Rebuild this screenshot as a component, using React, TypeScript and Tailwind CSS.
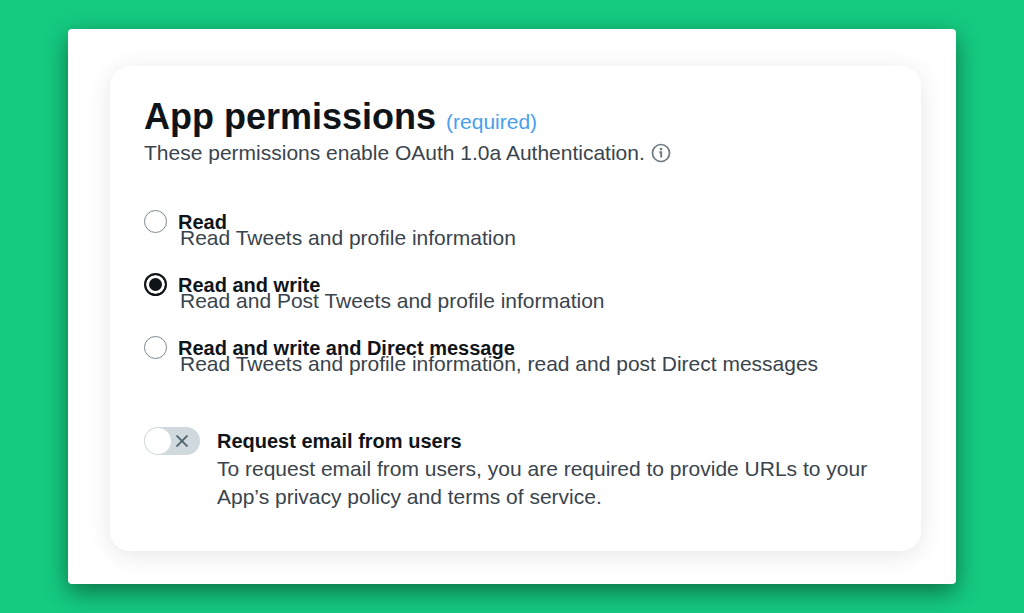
import { useState } from "react";

const options = [
  {
    id: "read",
    title: "Read",
    description: "Read Tweets and profile information",
  },
  {
    id: "read-write",
    title: "Read and write",
    description: "Read and Post Tweets and profile information",
  },
  {
    id: "read-write-dm",
    title: "Read and write and Direct message",
    description:
      "Read Tweets and profile information, read and post Direct messages",
  },
];

function InfoIcon() {
  return (
    <svg
      viewBox="0 0 20 20"
      className="size-5 shrink-0 text-[#6b7882]"
      fill="none"
      stroke="currentColor"
      aria-hidden="true"
    >
      <circle cx="10" cy="10" r="8.5" strokeWidth="1.7" />
      <circle cx="10" cy="6" r="1.3" fill="currentColor" stroke="none" />
      <path d="M8.3 9.2H10.2V14.6" strokeWidth="1.9" />
    </svg>
  );
}

export default function App() {
  const [permission, setPermission] = useState("read-write");
  const [requestEmail, setRequestEmail] = useState(false);

  return (
    <div className="min-h-screen bg-[#15cb80] px-[68px] py-[29px] font-['Liberation_Sans',Arial,sans-serif] text-[21px] text-[#3a444c]">
      <main className="rounded-[4px] bg-white pt-[37px] pr-[35px] pb-[33px] pl-[42px] shadow-[0_8px_24px_rgba(0,0,0,0.45)]">
        <section className="rounded-[20px] bg-white px-[34px] pt-[29px] pb-10 shadow-[0_4px_24px_rgba(0,0,0,0.1)]">
          <div className="flex items-baseline gap-2.5">
            <h1 className="text-4xl leading-[44px] font-bold text-[#0f1419]">
              App permissions
            </h1>
            <span className="leading-7 text-[#4a9fec]">(required)</span>
          </div>
          <div className="flex items-center gap-1.5 leading-7">
            <p>These permissions enable OAuth 1.0a Authentication.</p>
            <InfoIcon />
          </div>

          <fieldset className="mt-[43px] flex flex-col gap-[23px]">
            {options.map((option) => (
              <div key={option.id} className="flex gap-[11px] leading-6">
                <input
                  type="radio"
                  id={option.id}
                  name="permission"
                  checked={permission === option.id}
                  onChange={() => setPermission(option.id)}
                  className="size-[23px] shrink-0 appearance-none rounded-full border border-[#7c8993] bg-white checked:border-2 checked:border-[#0f1419] checked:bg-[#0f1419] checked:shadow-[inset_0_0_0_3px_white]"
                />
                <div>
                  <label
                    htmlFor={option.id}
                    className="block text-xl leading-6 font-bold text-[#0f1419]"
                  >
                    {option.title}
                  </label>
                  <p className="-mt-2 pl-0.5">{option.description}</p>
                </div>
              </div>
            ))}
          </fieldset>

          <div className="mt-[51px] flex gap-[17px] leading-7">
            <div className="relative h-7 w-14 shrink-0">
              <input
                type="checkbox"
                role="switch"
                id="request-email"
                checked={requestEmail}
                onChange={() => setRequestEmail(!requestEmail)}
                className="block h-7 w-14 appearance-none rounded-full bg-[#cfd9de] before:m-px before:block before:size-[26px] before:rounded-full before:bg-white checked:bg-[#0f1419] checked:before:ml-[29px]"
              />
              {!requestEmail && (
                <svg
                  viewBox="0 0 12 12"
                  className="pointer-events-none absolute top-2 right-3 size-3 text-[#536471]"
                  stroke="currentColor"
                  strokeWidth="1.9"
                  aria-hidden="true"
                >
                  <path d="M0.5 0.5L11.5 11.5M11.5 0.5L0.5 11.5" />
                </svg>
              )}
            </div>
            <div>
              <label
                htmlFor="request-email"
                className="block text-xl leading-7 font-bold text-[#0f1419]"
              >
                Request email from users
              </label>
              <p>
                To request email from users, you are required to provide URLs to
                your App’s privacy policy and terms of service.
              </p>
            </div>
          </div>
        </section>
      </main>
    </div>
  );
}
